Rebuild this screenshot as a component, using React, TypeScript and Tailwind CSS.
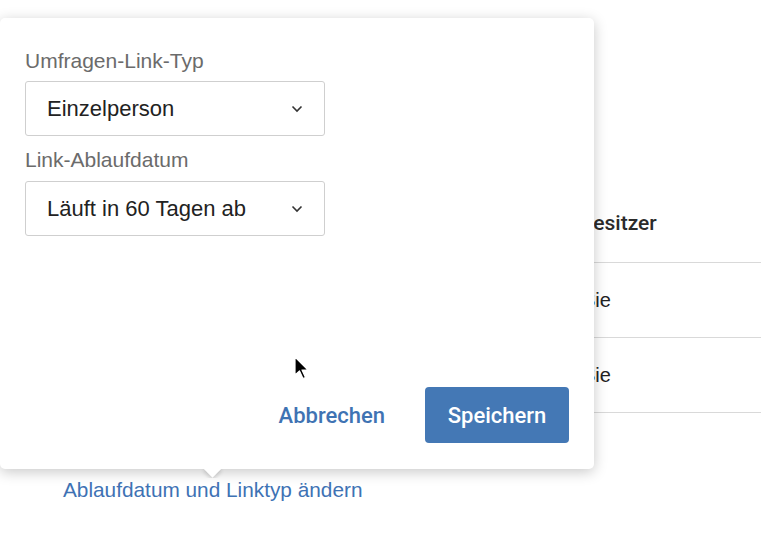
export default function App() {
  const rows = ["Sie", "Sie"];

  return (
    <div className="relative w-[761px] h-[541px] bg-white overflow-hidden font-['Liberation_Sans',Arial,sans-serif] text-[#222]">
      {/* Tabelle im Hintergrund */}
      <div className="pt-[186px] ml-[560px]">
        <div className="h-[77px] flex items-center pl-[20px] border-b border-[#d9d9d9] text-[21px] font-medium font-['Roboto',Arial,sans-serif] text-[#2b2b2b]">
          Besitzer
        </div>
        {rows.map((r, i) => (
          <div
            key={i}
            className="h-[75px] flex items-center pl-[22px] border-b border-[#d9d9d9] text-[20px]"
          >
            {r}
          </div>
        ))}
      </div>

      {/* Link unter dem Popover */}
      <div className="mt-[65px] pl-[63px]">
        <button className="text-[20.8px] leading-[24px] text-[#3e72b4]">
          Ablaufdatum und Linktyp ändern
        </button>
      </div>

      {/* Popover */}
      <div className="absolute left-0 top-[18px] w-[594px] h-[451px]">
        <div className="relative h-full rounded-[5px] bg-white shadow-[0_3px_14px_rgba(0,0,0,0.22)] flex flex-col px-[25px] pt-[31px] pb-[26px]">
          <label className="text-[21px] leading-[24px] text-[#6b6b6b] mb-[8px]">Umfragen-Link-Typ</label>
          <div className="w-[300px] h-[55px] border border-[#cfcfcf] rounded-[3px] flex items-center justify-between pl-[21px] pr-[21px]">
            <span className="text-[22px] text-[#222]">Einzelperson</span>
            <svg width="12" height="8" viewBox="0 0 12 8" fill="none" stroke="#333" strokeWidth="1.6">
              <path d="M1.5 1.5 L6 6 L10.5 1.5" />
            </svg>
          </div>

          <label className="text-[21px] leading-[24px] text-[#6b6b6b] mt-[12px] mb-[9px]">Link-Ablaufdatum</label>
          <div className="w-[300px] h-[55px] border border-[#cfcfcf] rounded-[3px] flex items-center justify-between pl-[21px] pr-[21px]">
            <span className="text-[22px] text-[#222]">Läuft in 60 Tagen ab</span>
            <svg width="12" height="8" viewBox="0 0 12 8" fill="none" stroke="#333" strokeWidth="1.6">
              <path d="M1.5 1.5 L6 6 L10.5 1.5" />
            </svg>
          </div>

          <div className="mt-auto flex justify-end items-center gap-[40px] font-['Roboto',Arial,sans-serif]">
            <button className="text-[22px] font-medium text-[#3f73b3]">Abbrechen</button>
            <button className="w-[144px] h-[56px] rounded-[4px] bg-[#4478b5] text-white text-[22px] font-medium">
              Speichern
            </button>
          </div>
        </div>
        {/* Pfeil */}
        <div className="absolute left-[200px] top-full w-[25px] h-[9px] overflow-hidden">
          <div className="absolute left-[6px] top-[-7px] w-[13px] h-[13px] rotate-45 bg-white shadow-[2px_2px_4px_rgba(0,0,0,0.15)]"></div>
        </div>
      </div>

      {/* Mauszeiger */}
      <svg className="absolute left-[294px] top-[356px]" width="16" height="25" viewBox="0 0 16 25">
        <path d="M1 1 L1 19 L5.5 15 L9 22.5 L11.5 21.5 L8 14 L14 14 Z" fill="#000" stroke="#fff" strokeWidth="1.2" strokeLinejoin="round" />
      </svg>
    </div>
  );
}
